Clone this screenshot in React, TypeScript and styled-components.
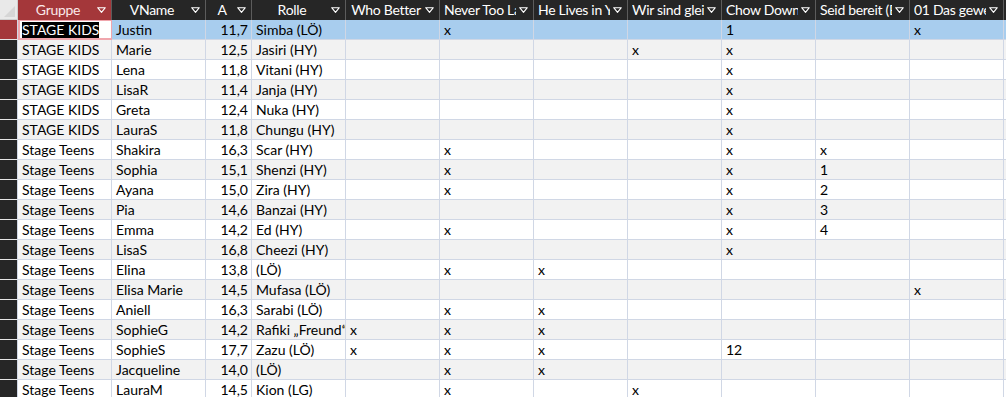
import React from "react";
import styled, { createGlobalStyle } from "styled-components";

const GlobalStyle = createGlobalStyle`
  html, body {
    margin: 0;
    padding: 0;
    background: #ffffff;
    overflow: hidden;
  }
  body {
    font-family: Lato, "Open Sans", "Liberation Sans", sans-serif;
    font-size: 14px;
    color: #000;
  }
`;

const COLS = "18px 94px 94px 46px repeat(8, 94px) 1fr";

const Sheet = styled.div`
  width: 1006px;
  height: 397px;
  overflow: hidden;
  display: flex;
  flex-direction: column;
`;

const HeaderRow = styled.div`
  display: grid;
  grid-template-columns: ${COLS};
  height: 20px;
  background: #262626;
  flex-shrink: 0;
`;

const Corner = styled.div`
  background: #e9e9e9;
  border-right: 1px solid #cfcfcf;
  border-bottom: 1px solid #cfcfcf;
  box-sizing: border-box;
  display: flex;
  align-items: flex-end;
  justify-content: flex-end;
  padding: 0 2px 2px 0;
`;

const HeadCell = styled.div<{ $active?: boolean }>`
  display: flex;
  align-items: center;
  box-sizing: border-box;
  background: ${(p) => (p.$active ? "#a4373a" : "#262626")};
  color: ${(p) => (p.$active ? "#fbe9ea" : "#ffffff")};
  border-right: 1px solid #5c5c5c;
  padding: 0 5px 0 4px;
  overflow: hidden;
  min-width: 0;
`;

const HeadLabel = styled.span`
  flex: 1;
  min-width: 0;
  text-align: center;
  white-space: nowrap;
  overflow: hidden;
  line-height: 20px;
  letter-spacing: -0.3px;
`;

const Arrow = styled.svg`
  flex-shrink: 0;
  margin-left: 3px;
`;

const Filler = styled.div`
  background: #262626;
`;

const Row = styled.div<{ $stripe: boolean; $selected: boolean }>`
  display: grid;
  grid-template-columns: ${COLS};
  height: 20px;
  flex-shrink: 0;
  background: ${(p) =>
    p.$selected ? "#a8cdee" : p.$stripe ? "#f2f2f2" : "#ffffff"};
`;

const Selector = styled.div<{ $current: boolean }>`
  background: ${(p) => (p.$current ? "#a4373a" : "#262626")};
  border-right: 1px solid #d0d7e5;
  border-bottom: 1px solid #e6e6e6;
  box-sizing: border-box;
`;

const Cell = styled.div<{ $num?: boolean }>`
  box-sizing: border-box;
  border-right: 1px solid #d0d7e5;
  border-bottom: 1px solid #d0d7e5;
  padding: 0 3px 0 4px;
  line-height: 20px;
  white-space: nowrap;
  overflow: hidden;
  text-align: ${(p) => (p.$num ? "right" : "left")};
  min-width: 0;
`;

const FocusCell = styled(Cell)`
  background: #ffffff;
  border: 1px solid #f0a6ad;
  border-left-width: 2px;
  border-bottom-width: 2px;
  padding: 0 3px 0 2px;
  line-height: 17px;
`;

const Highlight = styled.span`
  background: #000000;
  color: #ffffff;
  display: inline-block;
  line-height: 16px;
  margin-top: 1px;
`;

const EndCell = styled.div`
  border-bottom: 1px solid #d0d7e5;
`;

const headers = [
  "Gruppe",
  "VName",
  "A",
  "Rolle",
  "Who Better",
  "Never Too Late",
  "He Lives in You",
  "Wir sind gleich",
  "Chow Down",
  "Seid bereit (Be Prepared)",
  "01 Das gewesen",
];

type Rec = [string, string, string, string, ...string[]];

const rows: Rec[] = [
  ["STAGE KIDS", "Justin", "11,7", "Simba (LÖ)", "", "x", "", "", "1", "", "x"],
  ["STAGE KIDS", "Marie", "12,5", "Jasiri  (HY)", "", "", "", "x", "x", "", ""],
  ["STAGE KIDS", "Lena", "11,8", "Vitani (HY)", "", "", "", "", "x", "", ""],
  ["STAGE KIDS", "LisaR", "11,4", "Janja (HY)", "", "", "", "", "x", "", ""],
  ["STAGE KIDS", "Greta", "12,4", "Nuka (HY)", "", "", "", "", "x", "", ""],
  ["STAGE KIDS", "LauraS", "11,8", "Chungu (HY)", "", "", "", "", "x", "", ""],
  ["Stage Teens", "Shakira", "16,3", "Scar (HY)", "", "x", "", "", "x", "x", ""],
  ["Stage Teens", "Sophia", "15,1", "Shenzi (HY)", "", "x", "", "", "x", "1", ""],
  ["Stage Teens", "Ayana", "15,0", "Zira (HY)", "", "x", "", "", "x", "2", ""],
  ["Stage Teens", "Pia", "14,6", "Banzai (HY)", "", "", "", "", "x", "3", ""],
  ["Stage Teens", "Emma", "14,2", "Ed (HY)", "", "x", "", "", "x", "4", ""],
  ["Stage Teens", "LisaS", "16,8", "Cheezi (HY)", "", "", "", "", "x", "", ""],
  ["Stage Teens", "Elina", "13,8", "(LÖ)", "", "x", "x", "", "", "", ""],
  ["Stage Teens", "Elisa Marie", "14,5", "Mufasa (LÖ)", "", "", "", "", "", "", "x"],
  ["Stage Teens", "Aniell", "16,3", "Sarabi (LÖ)", "", "x", "x", "", "", "", ""],
  ["Stage Teens", "SophieG", "14,2", "Rafiki „Freund“", "x", "x", "x", "", "", "", ""],
  ["Stage Teens", "SophieS", "17,7", "Zazu (LÖ)", "x", "x", "x", "", "12", "", ""],
  ["Stage Teens", "Jacqueline", "14,0", "(LÖ)", "", "x", "x", "", "", "", ""],
  ["Stage Teens", "LauraM", "14,5", "Kion (LG)", "", "x", "", "x", "", "", ""],
];

const DropArrow = () => (
  <Arrow width="9" height="6" viewBox="0 0 9 6">
    <polygon
      points="0.7,0.7 8.3,0.7 4.5,5.3"
      fill="none"
      stroke="#ffffff"
      strokeWidth="1.1"
      strokeLinejoin="round"
    />
  </Arrow>
);

export default function App() {
  return (
    <>
      <GlobalStyle />
      <Sheet>
        <HeaderRow>
          <Corner>
            <svg width="11" height="11" viewBox="0 0 11 11">
              <polygon points="11,0 11,11 0,11" fill="#d6d6d6" />
            </svg>
          </Corner>
          {headers.map((h, i) => (
            <HeadCell key={h} $active={i === 0}>
              <HeadLabel>{h}</HeadLabel>
              <DropArrow />
            </HeadCell>
          ))}
          <Filler />
        </HeaderRow>
        {rows.map((r, ri) => (
          <Row key={ri} $stripe={ri % 2 === 1} $selected={ri === 0}>
            <Selector $current={ri === 0} />
            {r.map((v, ci) =>
              ri === 0 && ci === 0 ? (
                <FocusCell key={ci}>
                  <Highlight>{v}</Highlight>
                </FocusCell>
              ) : (
                <Cell key={ci} $num={ci === 2}>
                  {v}
                </Cell>
              )
            )}
            <EndCell />
          </Row>
        ))}
      </Sheet>
    </>
  );
}
